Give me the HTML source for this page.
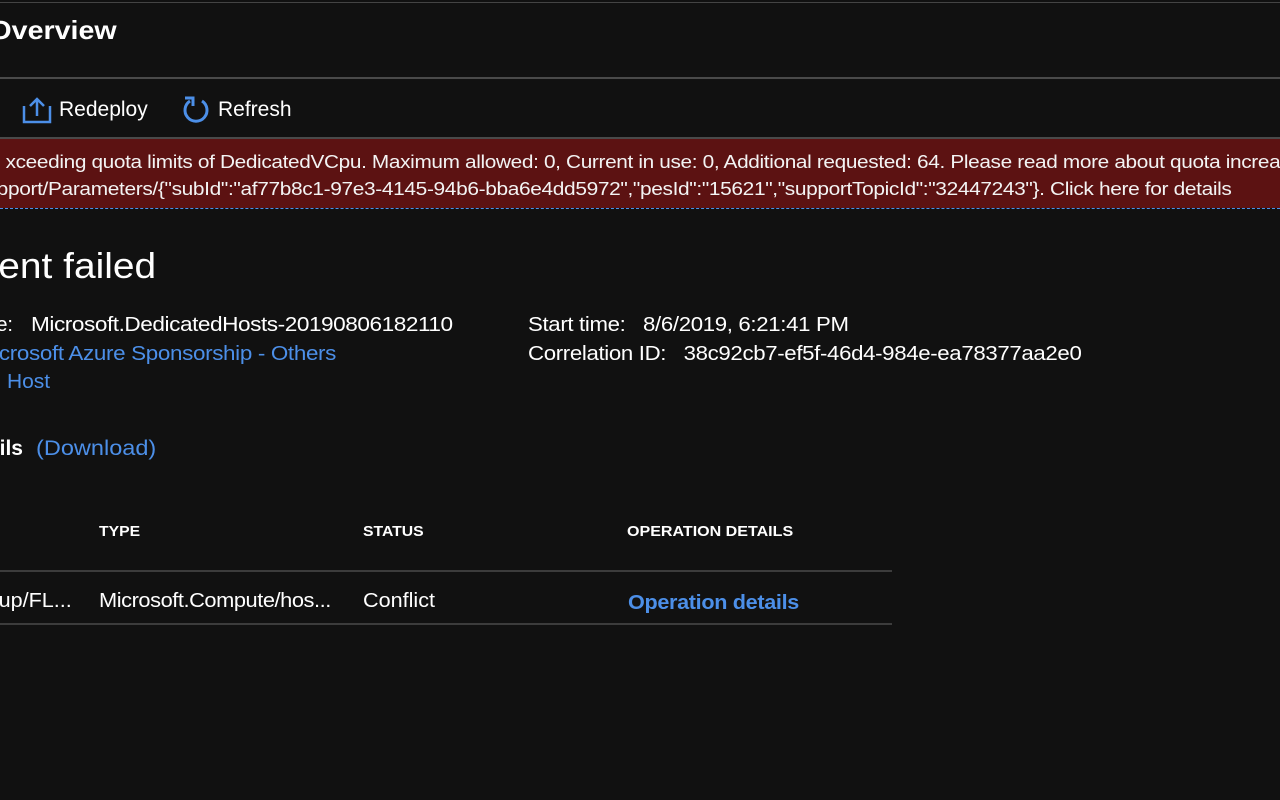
<!DOCTYPE html>
<html><head><style>
body{margin:0;width:1280px;height:800px;background:#111;overflow:hidden;position:relative;font-family:"Liberation Sans",sans-serif;color:#fff}
.a{position:absolute;white-space:nowrap;transform-origin:left center}
.r{position:absolute;white-space:nowrap;text-align:right;transform-origin:right center}
.line{position:absolute;left:0;height:1px;background:#555}
.blue{color:#4c8fe8}
</style></head><body>
<div class="line" style="top:2px;width:1280px;background:#444"></div>
<div class="r" style="right:1163px;top:15px;font-size:26px;font-weight:bold;transform:scaleX(1.1)">Overview</div>
<div class="line" style="top:77px;width:1280px;height:2px;background:#4a4a4a"></div>
<svg class="a" style="left:22px;top:96px" width="30" height="28" viewBox="0 0 30 28"><path d="M2 10v16h26V10" fill="none" stroke="#4c8fe8" stroke-width="2.5"/><path d="M15 20V3M8 10l7-7 7 7" fill="none" stroke="#4c8fe8" stroke-width="2.5"/></svg>
<div class="a" style="left:59px;top:98px;font-size:21px">Redeploy</div>
<svg class="a" style="left:182px;top:95px" width="28" height="28" viewBox="0 0 28 28"><path d="M8 6A11 11 0 1 0 20 6" fill="none" stroke="#4c8fe8" stroke-width="3"/><path d="M3 3h8v8" fill="none" stroke="#4c8fe8" stroke-width="3"/></svg>
<div class="a" style="left:218px;top:98px;font-size:21px">Refresh</div>
<div class="line" style="top:137px;width:1280px;height:2px;background:#4a4a4a"></div>
<div class="a" style="left:0;top:139px;width:1280px;height:69px;background:#5c1212;overflow:hidden">
<div class="r" style="right:-10px;top:13px;font-size:18px;letter-spacing:-0.3px;color:#f3f3f3;transform:scaleX(1.155)">xceeding quota limits of DedicatedVCpu. Maximum allowed: 0, Current in use: 0, Additional requested: 64. Please read more about quota increas</div>
<div class="r" style="right:48px;top:40px;font-size:18px;letter-spacing:-0.3px;color:#f3f3f3;transform:scaleX(1.16)">pport/Parameters/{"subId":"af77b8c1-97e3-4145-94b6-bba6e4dd5972","pesId":"15621","supportTopicId":"32447243"}. Click here for details</div>
</div>
<div class="a" style="left:0;top:208px;width:1280px;border-top:1px dashed #4c8fe8"></div>
<div class="r" style="right:1124px;top:245px;font-size:36px;transform:scaleX(1.08)">ent failed</div>
<div class="r" style="right:1267px;top:314px;font-size:20px">e:</div>
<div class="a" style="left:31px;top:314px;font-size:20px;letter-spacing:-0.4px;transform:scaleX(1.13)">Microsoft.DedicatedHosts-20190806182110</div>
<div class="r blue" style="right:944px;top:343px;font-size:20px;letter-spacing:-0.3px;transform:scaleX(1.12)">crosoft Azure Sponsorship - Others</div>
<div class="r blue" style="right:1230px;top:371px;font-size:20px;transform:scaleX(1.05)">Host</div>
<div class="a" style="left:528px;top:314px;font-size:20px;letter-spacing:-0.3px;transform:scaleX(1.11)">Start time:&nbsp;&nbsp;&nbsp;8/6/2019, 6:21:41 PM</div>
<div class="a" style="left:528px;top:343px;font-size:20px;letter-spacing:-0.3px;transform:scaleX(1.11)">Correlation ID:&nbsp;&nbsp;&nbsp;38c92cb7-ef5f-46d4-984e-ea78377aa2e0</div>
<div class="r" style="right:1257px;top:437px;font-size:21px;font-weight:bold">ils</div>
<div class="a blue" style="left:36px;top:437px;font-size:21px;transform:scaleX(1.12)">(Download)</div>
<div class="a" style="left:99px;top:523px;font-size:15px;font-weight:bold;transform:scaleX(1.05)">TYPE</div>
<div class="a" style="left:363px;top:523px;font-size:15px;font-weight:bold;transform:scaleX(1.05)">STATUS</div>
<div class="a" style="left:627px;top:523px;font-size:15px;font-weight:bold;transform:scaleX(1.07)">OPERATION DETAILS</div>
<div class="line" style="top:570px;width:892px;height:2px;background:#3c3c3c"></div>
<div class="r" style="right:1208px;top:590px;font-size:20px;transform:scaleX(1.08)">up/FL...</div>
<div class="a" style="left:99px;top:590px;font-size:20px;letter-spacing:-0.4px;transform:scaleX(1.09)">Microsoft.Compute/hos...</div>
<div class="a" style="left:363px;top:590px;font-size:20px;transform:scaleX(1.08)">Conflict</div>
<div class="a blue" style="left:628px;top:592px;font-size:20px;font-weight:bold;letter-spacing:-0.3px;transform:scaleX(1.08)">Operation details</div>
<div class="line" style="top:623px;width:892px;height:2px;background:#3c3c3c"></div>
</body></html>
